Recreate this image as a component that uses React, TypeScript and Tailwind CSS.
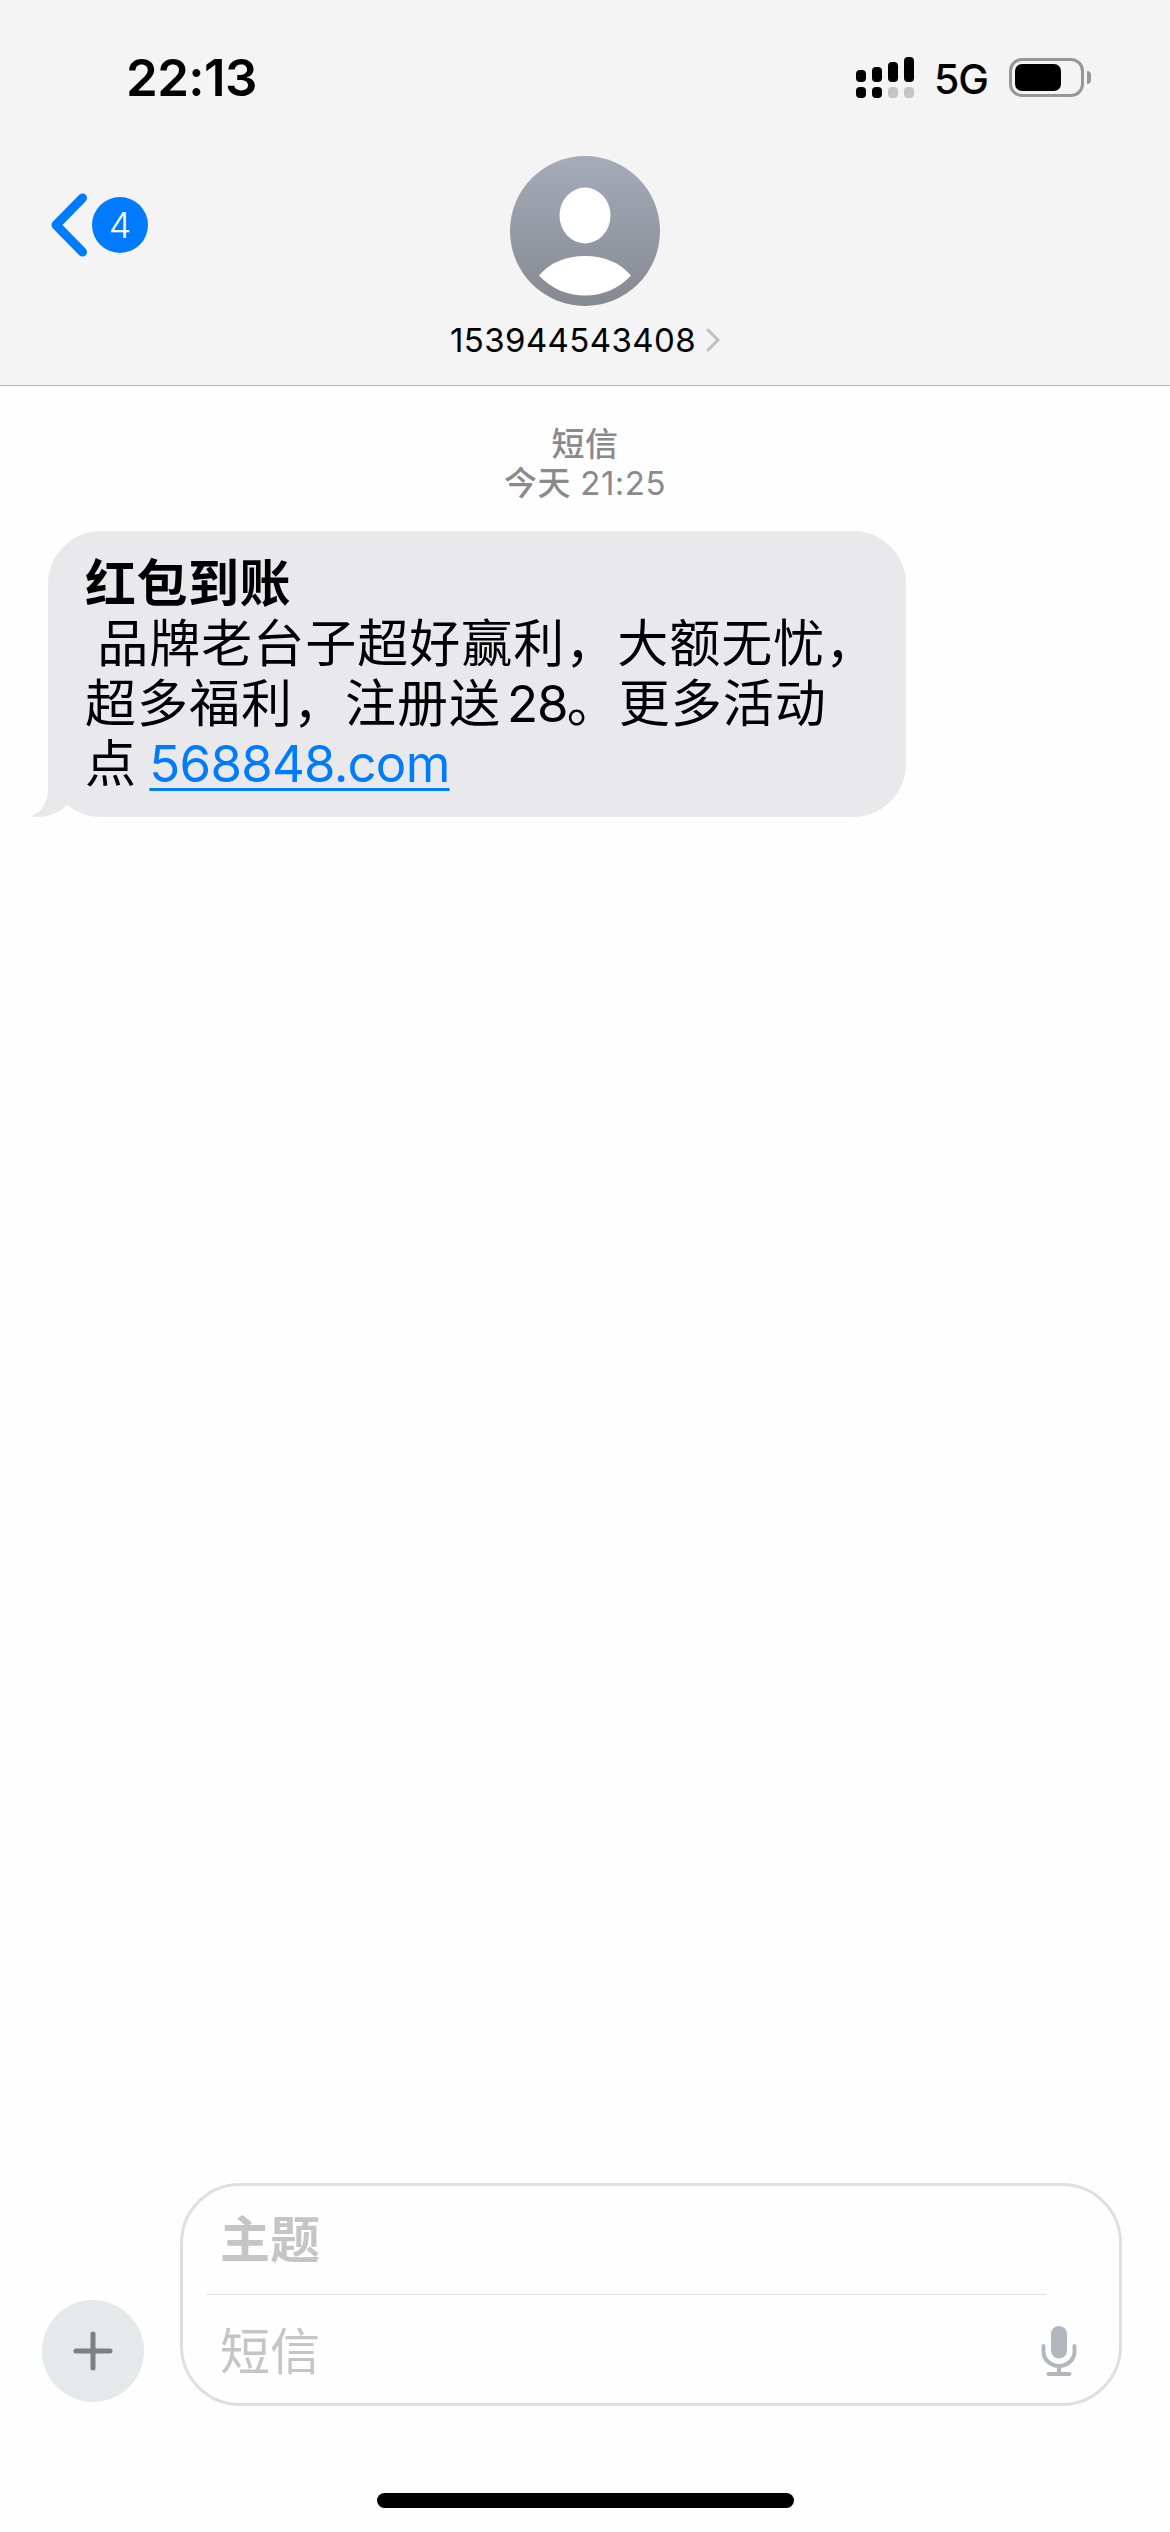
import React from 'react'

const signalBars = [
  { height: 'h-[12px]', active: true },
  { height: 'h-[15px]', active: true },
  { height: 'h-[20px]', active: false },
  { height: 'h-[25px]', active: false },
]

const StatusBar: React.FC = () => {
  return (
    <div className="flex h-[156px] justify-between pt-[47px] pl-[126px] pr-[79px]">
      <span className="text-[51px] leading-[61px] font-semibold tracking-[-0.6px]">22:13</span>

      <div className="flex items-start">
        {/* Dual SIM signal */}
        <div className="mt-[10px] flex items-end gap-[6px]">
          {signalBars.map((bar) => (
            <div key={bar.height} className="flex flex-col gap-[5px]">
              <div className={`w-[10px] rounded-[4px] bg-black ${bar.height}`} />
              <div
                className={`h-[11px] w-[10px] rounded-[4px] ${bar.active ? 'bg-black' : 'bg-[#c5c5c5]'}`}
              />
            </div>
          ))}
        </div>

        <span className="ml-[20px] w-[75px] text-[41px] leading-[65px] font-medium tracking-[-1px]">5G</span>

        {/* Battery */}
        <div className="mt-[11px] flex items-center gap-[3px]">
          <div className="h-[39px] w-[75px] rounded-[13px] border-[3px] border-[#979797] p-[3px]">
            <div className="h-[27px] w-[46px] rounded-[7px] bg-black" />
          </div>
          <div className="h-[13px] w-[4px] rounded-r-full bg-[#979797]" />
        </div>
      </div>
    </div>
  )
}

const Avatar: React.FC = () => {
  return (
    <svg width="150" height="150" viewBox="0 0 150 150">
      <defs>
        <linearGradient id="avatar" x1="0" y1="0" x2="0" y2="1">
          <stop offset="0" stopColor="#a5abb9" />
          <stop offset="1" stopColor="#858992" />
        </linearGradient>
      </defs>
      <circle cx="75" cy="75" r="75" fill="url(#avatar)" />
      <ellipse cx="75" cy="59.5" rx="25.5" ry="28" fill="#fff" />
      <path d="M29 119.5C40 106.500 56 100 75 100s35 6.500 46 19.500C109 132.500 93 139.500 75 139.500S41 132.500 29 119.500z" fill="#fff" />
    </svg>
  )
}

const Header: React.FC = () => {
  return (
    <header className="h-[386px] border-b border-[#b2b2b2] bg-[#f4f4f4]">
      <StatusBar />
      <div className="grid grid-cols-3">
        <button className="ml-[50px] mt-[37px] flex h-[64px] items-center gap-[4px]">
          <svg width="38" height="64" viewBox="0 0 38 64" fill="none">
            <path d="M32.500 5L6 32l26.500 27" stroke="#007aff" strokeWidth="9" strokeLinecap="round" strokeLinejoin="round" />
          </svg>
          <span className="flex h-14 w-14 items-center justify-center rounded-full bg-[#007aff] text-[36px] leading-[56px] font-light text-white">
            4
          </span>
        </button>

        <div className="flex flex-col items-center">
          <Avatar />
          <div className="mt-[14px] flex items-center gap-[10px]">
            <span className="text-[33px] leading-[40px] tracking-[0.4px]">153944543408</span>
            <svg width="14" height="24" viewBox="0 0 14 24" fill="none">
              <path d="M2 2l10 10L2 22" stroke="#bfbfc1" strokeWidth="3" strokeLinecap="round" strokeLinejoin="round" />
            </svg>
          </div>
        </div>
      </div>
    </header>
  )
}

const Message: React.FC = () => {
  return (
    <div className="relative ml-[48px] mt-[28px] h-[286px] w-[858px] rounded-[53px] bg-[#e9e9eb] pt-[23px] pl-[37px] text-[51px] leading-[60px] tracking-[1px]">
      {/* Bubble tail */}
      <svg className="absolute bottom-0 left-[-17px]" width="60" height="54" viewBox="0 0 60 54">
        <path d="M17 0V25C17 39 11 49 0 53.500C14 55.500 27 51 36 42L60 20V0z" fill="#e9e9eb" />
      </svg>

      <div className="relative whitespace-pre [word-spacing:-3px]">
        <p className="font-bold tracking-[0.5px]">红包到账</p>
        <p> 品牌老台子超好赢利，大额无忧，</p>
        <p>
          超多福利，注册送<span className="ml-[6px] mr-[-1px] tracking-[-1px]">28</span>。更多活动
        </p>
        <p>
          点 <a className="inline-block h-[60px] tracking-[-0.8px] text-[#007aff] underline decoration-[3px] underline-offset-[6px]">568848.com</a>
        </p>
      </div>
    </div>
  )
}

const Composer: React.FC = () => {
  return (
    <footer className="flex h-[223px] items-end pl-[42px] pr-[48px]">
      <button className="mb-[4px] flex h-[102px] w-[102px] items-center justify-center rounded-full bg-[#e7e8ea]">
        <svg width="40" height="40" viewBox="0 0 40 40">
          <path d="M20 3v34M3 20h34" stroke="#7e7e84" strokeWidth="5" strokeLinecap="round" />
        </svg>
      </button>

      <div className="ml-[36px] h-[223px] flex-1 rounded-[60px] border-[3px] border-[#dfdfdf] pl-[24px] text-[50px] text-[#c5c5c7]">
        <div className="mr-[73px] h-[109px] border-b border-[#dedede] pl-[13px] leading-[109px] font-bold">主题</div>
        <div className="flex h-[108px] items-center justify-between pl-[13px] pr-[42px]">
          <span className="mt-[5px] leading-[112px]">短信</span>
          <svg className="mt-[4px]" width="36" height="50" viewBox="0 0 36 50" fill="none">
            <rect x="10" y="0" width="16" height="32.500" rx="8" fill="#b2b7bf" />
            <path d="M2.500 20v5.500a15.500 14.500 0 0 0 31 0V20M18 40v8M7.500 48h21" stroke="#b2b7bf" strokeWidth="4" strokeLinecap="round" />
          </svg>
        </div>
      </div>
    </footer>
  )
}

const App: React.FC = () => {
  return (
    <div className="flex h-[2532px] w-[1170px] flex-col overflow-hidden bg-[#fefefe] font-['Inter','Noto_Sans_CJK_SC',sans-serif] text-black">
      <Header />

      <main className="flex-1">
        <div className="pt-[39px] text-center text-[33px] leading-[39px] font-medium tracking-[0.5px] text-[#8a8a8e]">
          <p>短信</p>
          <p>
            今天 <span className="font-normal">21:25</span>
          </p>
        </div>
        <Message />
      </main>

      <Composer />

      {/* Home indicator */}
      <div className="flex h-[126px] justify-center pt-[87px]">
        <div className="h-[15px] w-[417px] rounded-full bg-black" />
      </div>
    </div>
  )
}

export default App
